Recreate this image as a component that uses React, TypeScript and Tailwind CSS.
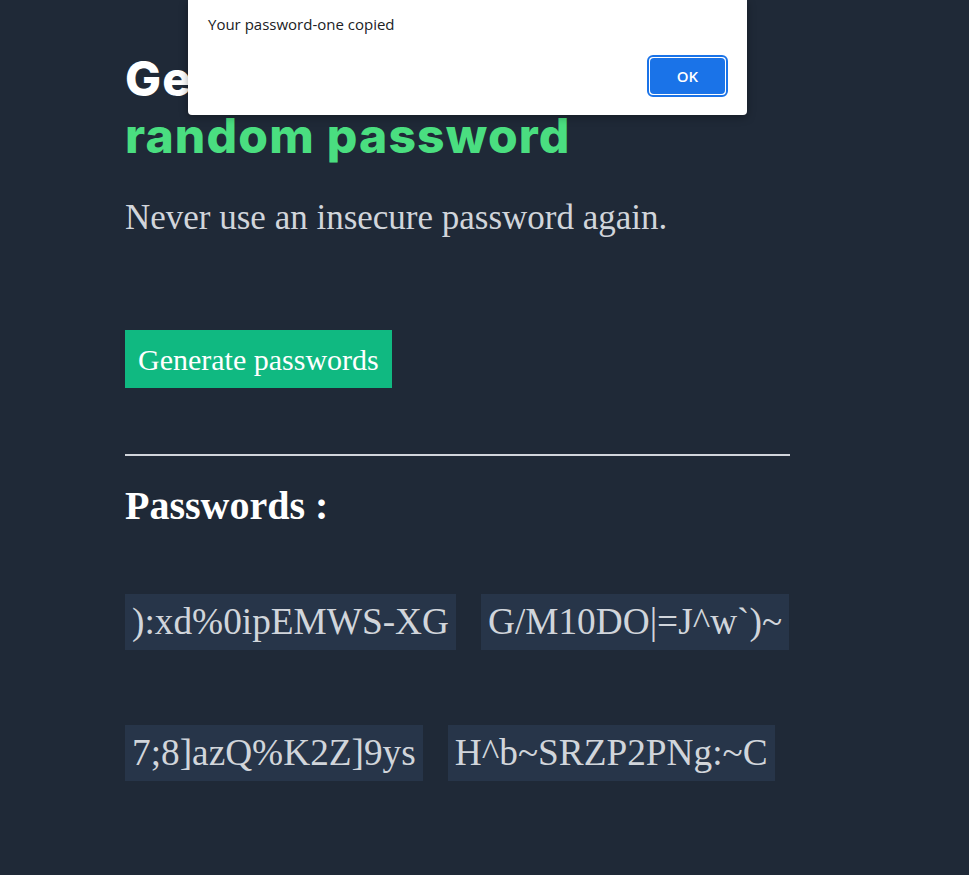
import React from "react";

const serif = { fontFamily: '"Liberation Serif", "Times New Roman", serif' };

export default function App() {
  const rows = [
    ["):xd%0ipEMWS-XG", "G/M10DO|=J^w`)~"],
    ["7;8]azQ%K2Z]9ys", "H^b~SRZP2PNg:~C"],
  ];
  return (
    <div className="relative min-h-[875px] w-full bg-[#1f2937]">
      <div className="pl-[125px] pt-[50px] w-[790px]">
        <h1 className="font-['Inter',sans-serif] font-extrabold text-[48px] leading-[57px] tracking-[1.2px]">
          <span className="text-white">Generate a</span>
          <br />
          <span className="text-[#4ade80]">random password</span>
        </h1>
        <p className="mt-[34px] text-[35px] leading-[40px] text-[#d1d5db]" style={serif}>
          Never use an insecure password again.
        </p>
        <button
          className="mt-[92px] block h-[58px] bg-[#10b981] px-[13px] text-[30px] text-white"
          style={serif}
        >
          Generate passwords
        </button>
        <hr className="mt-[66px] border-0 h-[2px] bg-[#d1d5db]" />
        <h2 className="mt-[28px] text-[40px] font-bold leading-[44px] text-white" style={serif}>
          Passwords :
        </h2>
        <div className="mt-[66px] flex flex-col gap-[75px]">
          {rows.map((r, i) => (
            <div key={i} className="flex gap-[25px]">
              {r.map((p) => (
                <div
                  key={p}
                  className="h-[56px] shrink-0 whitespace-nowrap bg-[#273549] px-[7px] text-[37.3px] leading-[56px] text-[#d1d5db]"
                  style={serif}
                >
                  {p}
                </div>
              ))}
            </div>
          ))}
        </div>
      </div>

      <div className="absolute left-[188px] top-0 w-[559px] h-[115px] rounded-b-[4px] bg-white shadow-[0_2px_8px_rgba(0,0,0,0.35)] font-['Open_Sans',sans-serif]">
        <div className="pl-[20px] pt-[13px] text-[15px] text-[#202124]">Your password-one copied</div>
        <div className="absolute right-[19px] top-[55px] rounded-[6px] border-2 border-[#1a73e8] p-[1px] bg-white">
          <button className="block w-[75px] h-[36px] rounded-[4px] bg-[#1a73e8] text-[15px] font-semibold text-white">
            OK
          </button>
        </div>
      </div>
    </div>
  );
}
